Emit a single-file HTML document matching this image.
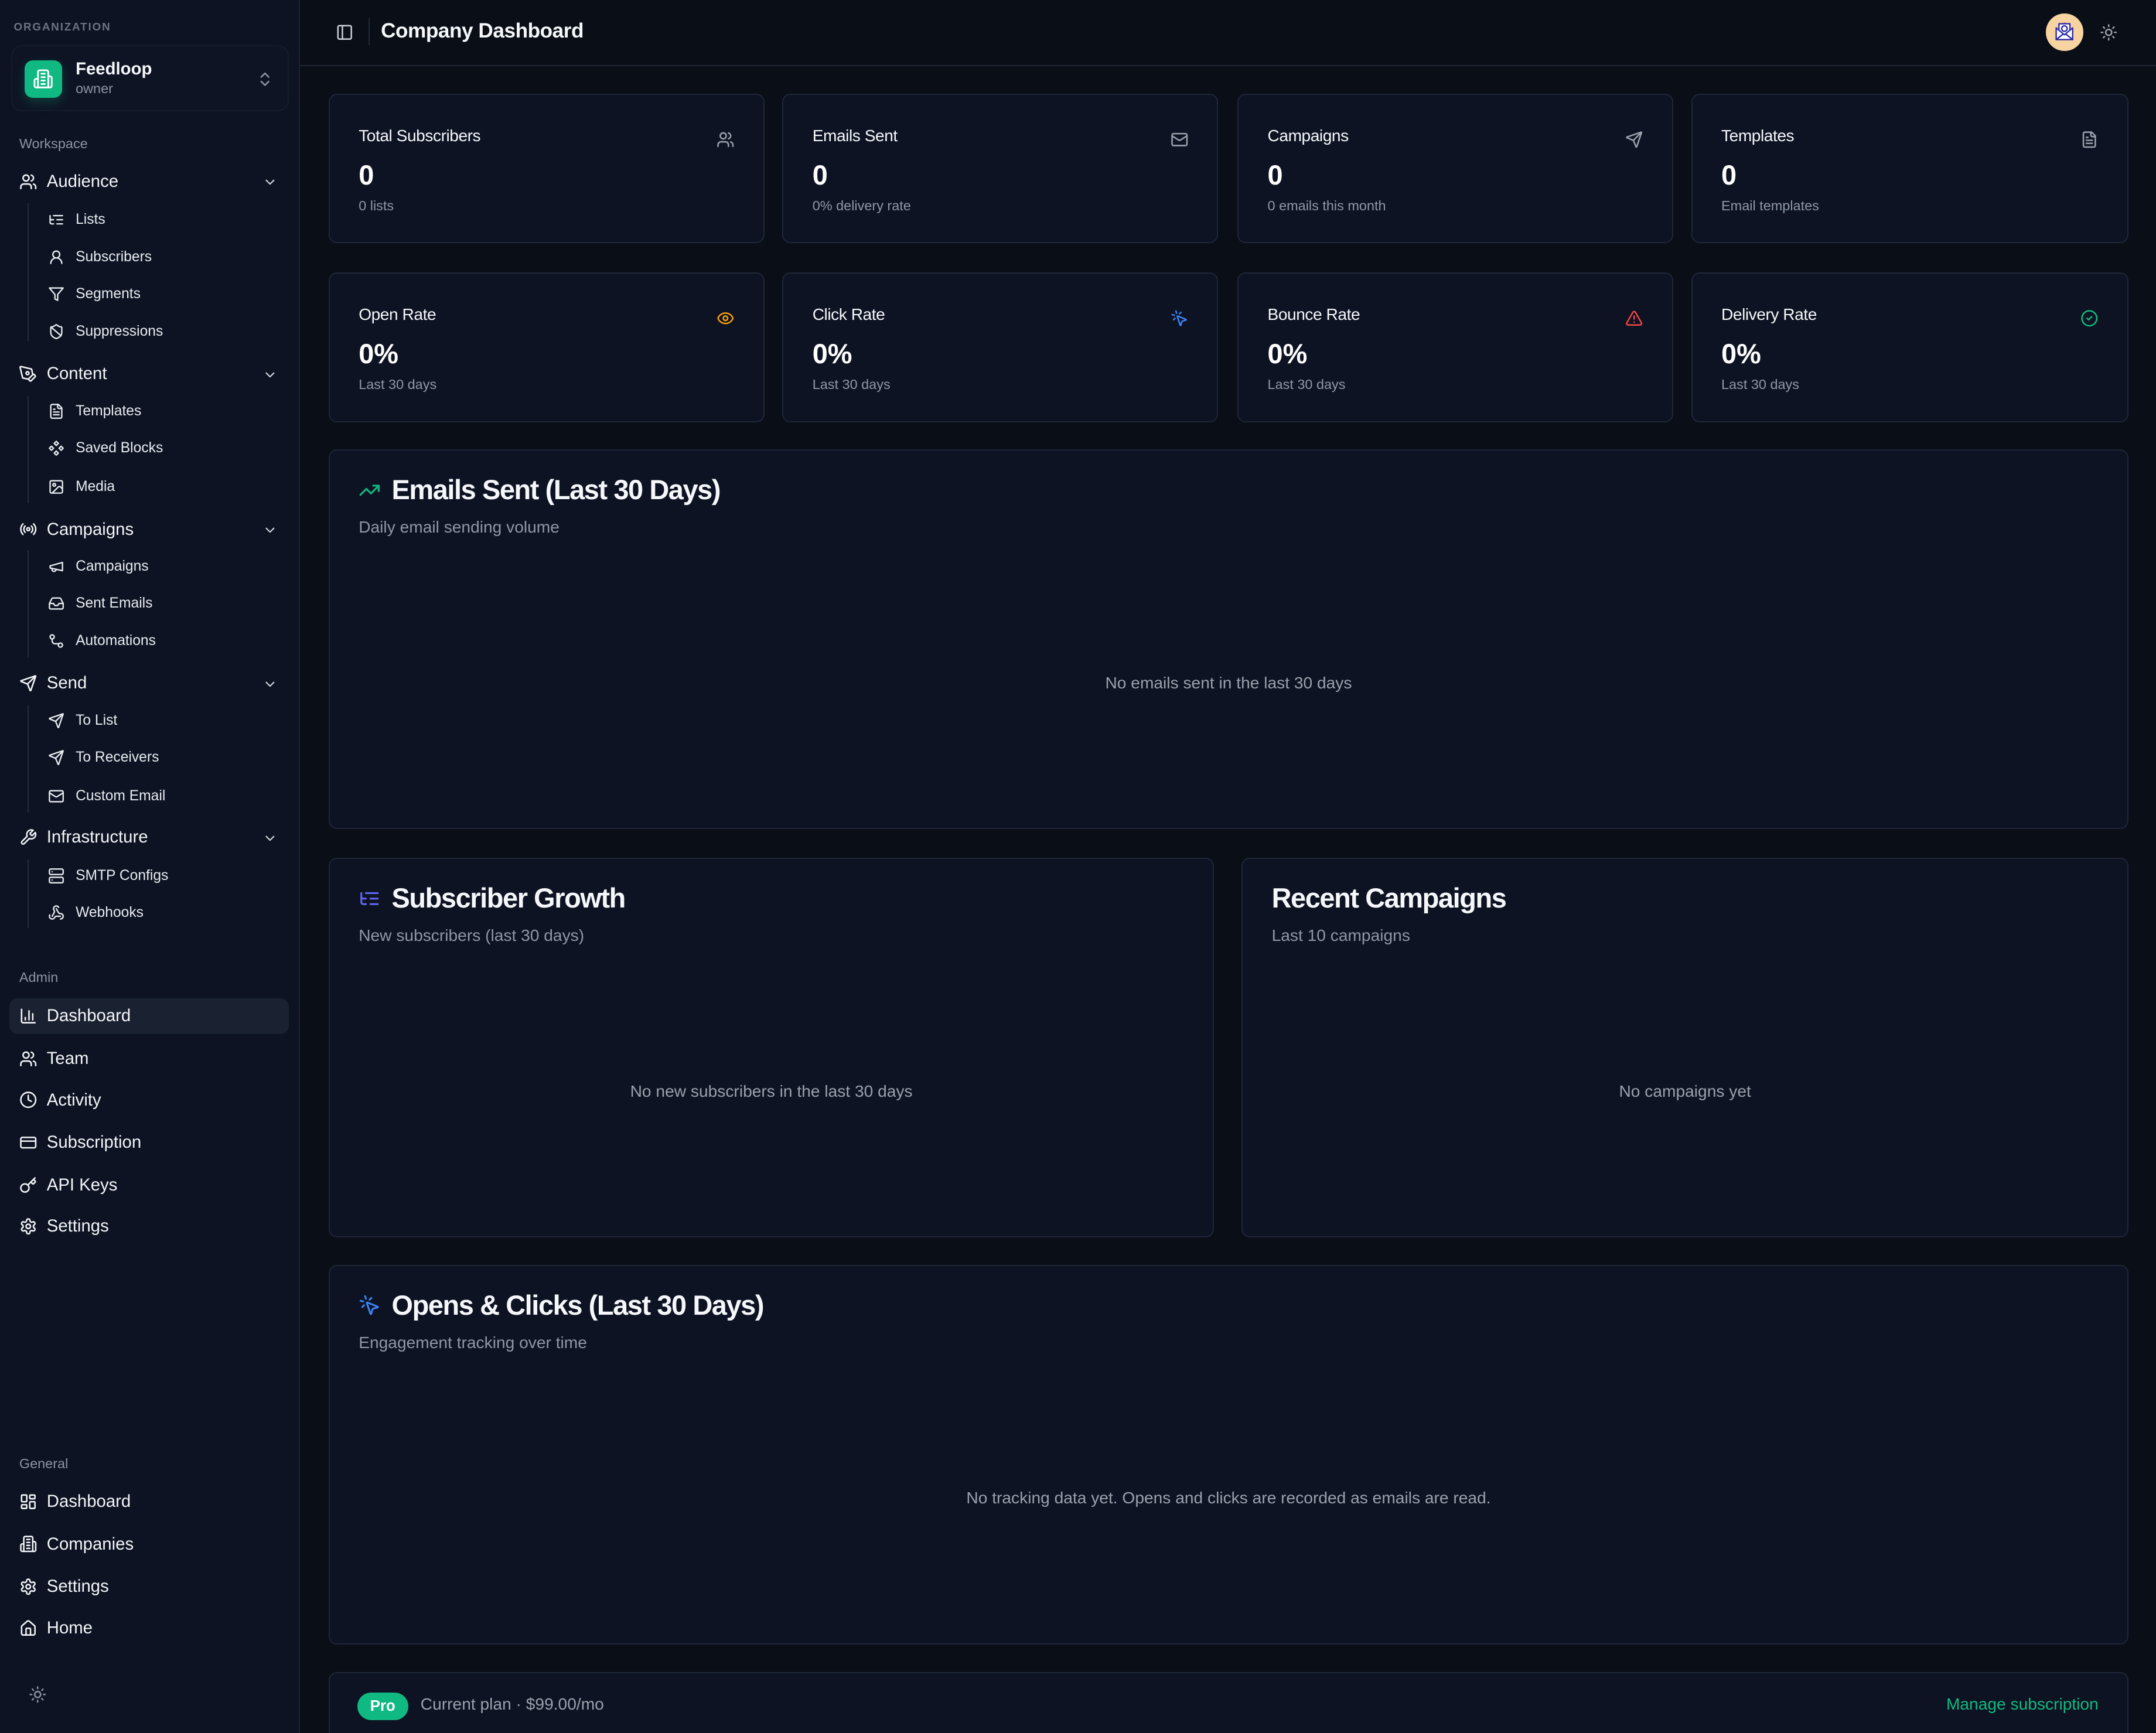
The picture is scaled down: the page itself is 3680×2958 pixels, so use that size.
<!DOCTYPE html>
<html><head><meta charset="utf-8"><style>
*{box-sizing:border-box;margin:0;padding:0}
html,body{width:3680px;height:2958px;overflow:hidden;background:#0a0e17}
#root{zoom:2.34694;width:1568px;height:1261px;position:relative;font-family:"Liberation Sans",sans-serif;color:#f5f7fa;background:#0a0e17;overflow:hidden}
.sb{position:absolute;left:0;top:0;width:218px;height:1261px;background:#0d1322;border-right:1px solid #1c2333}
.a{position:absolute;white-space:nowrap}
svg{fill:none;stroke:currentColor;stroke-width:2;stroke-linecap:round;stroke-linejoin:round}
.top{position:absolute;left:14px;font-size:12.5px;color:#f3f5f8;display:flex;align-items:center;height:20px}
.top svg{width:13px;height:13px;margin-right:7px}
.sub{position:absolute;left:35px;font-size:10.5px;color:#e8ebf0;display:flex;align-items:center;height:18px}
.sub svg{width:12px;height:12px;margin-right:8px}
.chev{position:absolute;left:191px;width:11px;height:11px;color:#d0d4dc}
.vl{position:absolute;left:20px;width:1px;background:#232b3b}
.lbl{position:absolute;left:14px;font-size:10px;color:#8c93a0}
.card{position:absolute;background:#0d1322;border:1px solid #1e2638;border-radius:6px}
.ct{position:absolute;left:21px;top:23px;font-size:12px;color:#f5f7fa;letter-spacing:-.2px}
.cv{position:absolute;left:21px;top:47px;font-size:20px;font-weight:bold;color:#fff}
.cs{position:absolute;left:21px;top:75px;font-size:10px;color:#8f97a6}
.ci{position:absolute;right:21px;top:26px;width:13px;height:13px}
.h2{position:absolute;left:21px;top:17px;font-size:20px;font-weight:bold;letter-spacing:-.6px;display:flex;align-items:center}
.h2 svg{width:16px;height:16px;margin-right:8px}
.h3{position:absolute;left:21px;top:49px;font-size:12px;color:#8f97a6}
.emp{position:absolute;left:0;right:0;text-align:center;font-size:12px;color:#9aa1ad}
</style></head><body><div id="root">
<div class="sb">
<div class="a" style="left:10px;top:15px;font-size:8px;letter-spacing:.8px;color:#6b7280;font-weight:bold">ORGANIZATION</div>
<div class="a" style="left:8px;top:33px;width:202px;height:48px;border-radius:8px;background:#0e1424;border:1px solid #151c2b"></div>
<div class="a" style="left:18px;top:44px;width:27px;height:27px;border-radius:6px;background:#10b981;box-shadow:0 3px 8px rgba(16,185,129,.25);color:#fff;display:flex;align-items:center;justify-content:center"><svg viewBox="0 0 24 24" style="width:15px;height:15px"><path d="M6 22V4a2 2 0 0 1 2-2h8a2 2 0 0 1 2 2v18zM6 12H4a2 2 0 0 0-2 2v6a2 2 0 0 0 2 2h2M18 9h2a2 2 0 0 1 2 2v9a2 2 0 0 1-2 2h-2M10 6h4M10 10h4M10 14h4M10 18h4"/></svg></div>
<div class="a" style="left:55px;top:43px;font-size:12.5px;font-weight:bold">Feedloop</div>
<div class="a" style="left:55px;top:59px;font-size:10px;color:#8c93a0">owner</div>
<svg class="a" viewBox="0 0 24 24" style="left:186px;top:51px;width:13px;height:13px;color:#8c93a0"><path d="m7 15 5 5 5-5M7 9l5-5 5 5"/></svg>
<div class="lbl" style="top:99px">Workspace</div>

<div class="top" style="top:122px"><svg viewBox="0 0 24 24"><path d="M16 21v-2a4 4 0 0 0-4-4H6a4 4 0 0 0-4 4v2"/><circle cx="9" cy="7" r="4"/><path d="M22 21v-2a4 4 0 0 0-3-3.87M16 3.13a4 4 0 0 1 0 7.75"/></svg>Audience</div>
<svg class="chev" viewBox="0 0 24 24" style="top:127px"><path d="m6 9 6 6 6-6"/></svg>
<div class="vl" style="top:148px;height:100px"></div>
<div class="sub" style="top:151px"><svg viewBox="0 0 24 24"><path d="M21 12h-8M21 6H8M21 18h-8M3 6v4c0 1.1.9 2 2 2h3M3 10v6c0 1.1.9 2 2 2h3"/></svg>Lists</div>
<div class="sub" style="top:178px"><svg viewBox="0 0 24 24"><circle cx="12" cy="8" r="5"/><path d="M20 21a8 8 0 0 0-16 0"/></svg>Subscribers</div>
<div class="sub" style="top:205px"><svg viewBox="0 0 24 24"><path d="M22 3H2l8 9.46V19l4 2v-8.54z"/></svg>Segments</div>
<div class="sub" style="top:232px"><svg viewBox="0 0 24 24"><path d="M20 13c0 5-3.5 7.5-7.66 8.95a1 1 0 0 1-.67-.01C7.5 20.5 4 18 4 13V6a1 1 0 0 1 1-1c2 0 4.5-1.2 6.24-2.72a1.17 1.17 0 0 1 1.52 0C14.51 3.81 17 5 19 5a1 1 0 0 1 1 1z"/><path d="M5 6l14 12"/></svg>Suppressions</div>

<div class="top" style="top:262px"><svg viewBox="0 0 24 24"><path d="M15.7 21.3a1 1 0 0 1-1.4 0l-1.6-1.6a1 1 0 0 1 0-1.4l5.6-5.6a1 1 0 0 1 1.4 0l1.6 1.6a1 1 0 0 1 0 1.4z"/><path d="m18 13-1.4-6.9a1 1 0 0 0-.8-.8L2.3 2.1a1 1 0 0 0-1.2 1.2l3.2 13.5a1 1 0 0 0 .8.8L12 19"/><circle cx="11" cy="11" r="2"/></svg>Content</div>
<svg class="chev" viewBox="0 0 24 24" style="top:267px"><path d="m6 9 6 6 6-6"/></svg>
<div class="vl" style="top:288px;height:78px"></div>
<div class="sub" style="top:290px"><svg viewBox="0 0 24 24"><path d="M15 2H6a2 2 0 0 0-2 2v16a2 2 0 0 0 2 2h12a2 2 0 0 0 2-2V7z"/><path d="M14 2v4a2 2 0 0 0 2 2h4M10 9H8M16 13H8M16 17H8"/></svg>Templates</div>
<div class="sub" style="top:317px"><svg viewBox="0 0 24 24"><path d="M12 2l3 3-3 3-3-3zM12 16l3 3-3 3-3-3zM5 9l3 3-3 3-3-3zM19 9l3 3-3 3-3-3z"/></svg>Saved Blocks</div>
<div class="sub" style="top:345px"><svg viewBox="0 0 24 24"><rect x="3" y="3" width="18" height="18" rx="2"/><circle cx="9" cy="9" r="2"/><path d="m21 15-3.1-3.1a2 2 0 0 0-2.8 0L6 21"/></svg>Media</div>

<div class="top" style="top:375px"><svg viewBox="0 0 24 24"><circle cx="12" cy="12" r="2"/><path d="M4.9 19.1C1 15.2 1 8.8 4.9 4.9M7.8 16.2c-2.3-2.3-2.3-6.1 0-8.5M16.2 7.8c2.3 2.3 2.3 6.1 0 8.5M19.1 4.9C23 8.8 23 15.1 19.1 19"/></svg>Campaigns</div>
<svg class="chev" viewBox="0 0 24 24" style="top:380px"><path d="m6 9 6 6 6-6"/></svg>
<div class="vl" style="top:400px;height:78px"></div>
<div class="sub" style="top:403px"><svg viewBox="0 0 24 24"><path d="m3 11 18-5v12L3 14v-3z"/><path d="M11.6 16.8a3 3 0 1 1-5.8-1.6"/></svg>Campaigns</div>
<div class="sub" style="top:430px"><svg viewBox="0 0 24 24"><path d="M22 12h-6l-2 3h-4l-2-3H2"/><path d="M5.45 5.11 2 12v6a2 2 0 0 0 2 2h16a2 2 0 0 0 2-2v-6l-3.45-6.89A2 2 0 0 0 16.76 4H7.24a2 2 0 0 0-1.79 1.11z"/></svg>Sent Emails</div>
<div class="sub" style="top:457px"><svg viewBox="0 0 24 24"><circle cx="6" cy="6" r="3"/><path d="M6 9v3a4 4 0 0 0 4 4h5"/><circle cx="18" cy="18" r="3"/></svg>Automations</div>

<div class="top" style="top:487px"><svg viewBox="0 0 24 24"><path d="M14.5 21.7a.5.5 0 0 0 .9 0l6.5-19a.5.5 0 0 0-.6-.6l-19 6.5a.5.5 0 0 0 0 .9l7.9 3.2a2 2 0 0 1 1.1 1.1z"/><path d="m21.9 2.1-10.9 10.9"/></svg>Send</div>
<svg class="chev" viewBox="0 0 24 24" style="top:492px"><path d="m6 9 6 6 6-6"/></svg>
<div class="vl" style="top:513px;height:78px"></div>
<div class="sub" style="top:515px"><svg viewBox="0 0 24 24"><path d="M14.5 21.7a.5.5 0 0 0 .9 0l6.5-19a.5.5 0 0 0-.6-.6l-19 6.5a.5.5 0 0 0 0 .9l7.9 3.2a2 2 0 0 1 1.1 1.1z"/><path d="m21.9 2.1-10.9 10.9"/></svg>To List</div>
<div class="sub" style="top:542px"><svg viewBox="0 0 24 24"><path d="M14.5 21.7a.5.5 0 0 0 .9 0l6.5-19a.5.5 0 0 0-.6-.6l-19 6.5a.5.5 0 0 0 0 .9l7.9 3.2a2 2 0 0 1 1.1 1.1z"/><path d="m21.9 2.1-10.9 10.9"/></svg>To Receivers</div>
<div class="sub" style="top:570px"><svg viewBox="0 0 24 24"><rect x="2" y="4" width="20" height="16" rx="2"/><path d="m22 7-8.97 5.7a1.94 1.94 0 0 1-2.06 0L2 7"/></svg>Custom Email</div>

<div class="top" style="top:599px"><svg viewBox="0 0 24 24"><path d="M14.7 6.3a1 1 0 0 0 0 1.4l1.6 1.6a1 1 0 0 0 1.4 0l3.77-3.77a6 6 0 0 1-7.94 7.94l-6.91 6.91a2.12 2.12 0 0 1-3-3l6.91-6.91a6 6 0 0 1 7.94-7.94l-3.76 3.76z"/></svg>Infrastructure</div>
<svg class="chev" viewBox="0 0 24 24" style="top:604px"><path d="m6 9 6 6 6-6"/></svg>
<div class="vl" style="top:625px;height:50px"></div>
<div class="sub" style="top:628px"><svg viewBox="0 0 24 24"><rect x="2" y="2" width="20" height="8" rx="2"/><rect x="2" y="14" width="20" height="8" rx="2"/><path d="M6 6h.01M6 18h.01"/></svg>SMTP Configs</div>
<div class="sub" style="top:655px"><svg viewBox="0 0 24 24"><path d="M18 16.98h-5.99c-1.1 0-1.95.94-2.48 1.9A4 4 0 0 1 2 17c.01-.7.2-1.4.57-2"/><path d="m6 17 3.13-5.78c.53-.97.1-2.18-.5-3.1a4 4 0 1 1 6.89-4.06"/><path d="m12 6 3.13 5.73C15.66 12.7 16.9 13 18 13a4 4 0 0 1 0 8"/></svg>Webhooks</div>

<div class="lbl" style="top:705px">Admin</div>
<div class="a" style="left:7px;top:726px;width:203px;height:26px;border-radius:6px;background:#1a2130"></div>
<div class="top" style="top:729px"><svg viewBox="0 0 24 24"><path d="M3 3v16a2 2 0 0 0 2 2h16M18 17V9M13 17V5M8 17v-3"/></svg>Dashboard</div>
<div class="top" style="top:760px"><svg viewBox="0 0 24 24"><path d="M16 21v-2a4 4 0 0 0-4-4H6a4 4 0 0 0-4 4v2"/><circle cx="9" cy="7" r="4"/><path d="M22 21v-2a4 4 0 0 0-3-3.87M16 3.13a4 4 0 0 1 0 7.75"/></svg>Team</div>
<div class="top" style="top:790px"><svg viewBox="0 0 24 24"><circle cx="12" cy="12" r="10"/><path d="M12 6v6l4 2"/></svg>Activity</div>
<div class="top" style="top:821px"><svg viewBox="0 0 24 24"><rect x="2" y="5" width="20" height="14" rx="2"/><path d="M2 10h20"/></svg>Subscription</div>
<div class="top" style="top:852px"><svg viewBox="0 0 24 24"><path d="m15.5 7.5 2.3 2.3a1 1 0 0 0 1.4 0l2.1-2.1a1 1 0 0 0 0-1.4L19 4M21 2l-9.6 9.6"/><circle cx="7.5" cy="15.5" r="5.5"/></svg>API Keys</div>
<div class="top" style="top:882px"><svg viewBox="0 0 24 24"><path d="M12.22 2h-.44a2 2 0 0 0-2 2v.18a2 2 0 0 1-1 1.73l-.43.25a2 2 0 0 1-2 0l-.15-.08a2 2 0 0 0-2.73.73l-.22.38a2 2 0 0 0 .73 2.73l.15.1a2 2 0 0 1 1 1.72v.51a2 2 0 0 1-1 1.74l-.15.09a2 2 0 0 0-.73 2.73l.22.38a2 2 0 0 0 2.73.73l.15-.08a2 2 0 0 1 2 0l.43.25a2 2 0 0 1 1 1.73V20a2 2 0 0 0 2 2h.44a2 2 0 0 0 2-2v-.18a2 2 0 0 1 1-1.73l.43-.25a2 2 0 0 1 2 0l.15.08a2 2 0 0 0 2.73-.73l.22-.39a2 2 0 0 0-.73-2.73l-.15-.08a2 2 0 0 1-1-1.74v-.5a2 2 0 0 1 1-1.74l.15-.09a2 2 0 0 0 .73-2.73l-.22-.38a2 2 0 0 0-2.73-.73l-.15.08a2 2 0 0 1-2 0l-.43-.25a2 2 0 0 1-1-1.73V4a2 2 0 0 0-2-2z"/><circle cx="12" cy="12" r="3"/></svg>Settings</div>

<div class="lbl" style="top:1059px">General</div>
<div class="top" style="top:1082px"><svg viewBox="0 0 24 24"><rect x="3" y="3" width="7" height="9" rx="1"/><rect x="14" y="3" width="7" height="5" rx="1"/><rect x="14" y="12" width="7" height="9" rx="1"/><rect x="3" y="16" width="7" height="5" rx="1"/></svg>Dashboard</div>
<div class="top" style="top:1113px"><svg viewBox="0 0 24 24"><path d="M6 22V4a2 2 0 0 1 2-2h8a2 2 0 0 1 2 2v18zM6 12H4a2 2 0 0 0-2 2v6a2 2 0 0 0 2 2h2M18 9h2a2 2 0 0 1 2 2v9a2 2 0 0 1-2 2h-2M10 6h4M10 10h4M10 14h4M10 18h4"/></svg>Companies</div>
<div class="top" style="top:1144px"><svg viewBox="0 0 24 24"><path d="M12.22 2h-.44a2 2 0 0 0-2 2v.18a2 2 0 0 1-1 1.73l-.43.25a2 2 0 0 1-2 0l-.15-.08a2 2 0 0 0-2.73.73l-.22.38a2 2 0 0 0 .73 2.73l.15.1a2 2 0 0 1 1 1.72v.51a2 2 0 0 1-1 1.74l-.15.09a2 2 0 0 0-.73 2.73l.22.38a2 2 0 0 0 2.73.73l.15-.08a2 2 0 0 1 2 0l.43.25a2 2 0 0 1 1 1.73V20a2 2 0 0 0 2 2h.44a2 2 0 0 0 2-2v-.18a2 2 0 0 1 1-1.73l.43-.25a2 2 0 0 1 2 0l.15.08a2 2 0 0 0 2.73-.73l.22-.39a2 2 0 0 0-.73-2.73l-.15-.08a2 2 0 0 1-1-1.74v-.5a2 2 0 0 1 1-1.74l.15-.09a2 2 0 0 0 .73-2.73l-.22-.38a2 2 0 0 0-2.73-.73l-.15.08a2 2 0 0 1-2 0l-.43-.25a2 2 0 0 1-1-1.73V4a2 2 0 0 0-2-2z"/><circle cx="12" cy="12" r="3"/></svg>Settings</div>
<div class="top" style="top:1174px"><svg viewBox="0 0 24 24"><path d="M15 21v-8a1 1 0 0 0-1-1h-4a1 1 0 0 0-1 1v8"/><path d="M3 10a2 2 0 0 1 .709-1.528l7-5.999a2 2 0 0 1 2.582 0l7 5.999A2 2 0 0 1 21 10v9a2 2 0 0 1-2 2H5a2 2 0 0 1-2-2z"/></svg>Home</div>
<svg class="a" viewBox="0 0 24 24" style="left:21px;top:1226px;width:13px;height:13px;color:#8c93a0"><circle cx="12" cy="12" r="4"/><path d="M12 2v2M12 20v2M4.93 4.93l1.41 1.41M17.66 17.66l1.41 1.41M2 12h2M20 12h2M6.34 17.66l-1.41 1.41M19.07 4.93l-1.41 1.41"/></svg>
</div>

<!-- header -->
<div class="a" style="left:218px;top:0;width:1350px;height:48px;border-bottom:1px solid #1e2638;background:#0a0e17"></div>
<svg class="a" viewBox="0 0 24 24" style="left:244px;top:17px;width:13px;height:13px;color:#c9ced6"><rect x="3" y="3" width="18" height="18" rx="2"/><path d="M9 3v18"/></svg>
<div class="a" style="left:268px;top:13px;width:1px;height:20px;background:#232b3b"></div>
<div class="a" style="left:277px;top:14px;font-size:15px;font-weight:bold;letter-spacing:-.2px">Company Dashboard</div>
<div class="a" style="left:1488px;top:10px;width:27px;height:27px;border-radius:50%;background:#f6d3a0;overflow:hidden">
<svg viewBox="0 0 27 27" style="width:27px;height:27px;stroke:#2b2aa8;stroke-width:1"><path d="M10 9l3.5-2.5L17 9" fill="#d9189a" stroke="none"/><rect x="9.5" y="7.5" width="8" height="8" fill="#fff"/><circle cx="13.5" cy="11" r="2"/><path d="M7.5 10.5v8.5h12v-8.5l-6 5z" fill="#fff"/><path d="M7.5 19l5-4M19.5 19l-5-4"/></svg></div>
<svg class="a" viewBox="0 0 24 24" style="left:1527px;top:17px;width:13px;height:13px;color:#9aa1ad"><circle cx="12" cy="12" r="4"/><path d="M12 2v2M12 20v2M4.93 4.93l1.41 1.41M17.66 17.66l1.41 1.41M2 12h2M20 12h2M6.34 17.66l-1.41 1.41M19.07 4.93l-1.41 1.41"/></svg>

<!-- stat cards row 1 -->
<div class="card" style="left:239px;top:68px;width:317px;height:109px"><div class="ct">Total Subscribers</div><div class="cv">0</div><div class="cs">0 lists</div><svg class="ci" viewBox="0 0 24 24" style="color:#9aa1ad"><path d="M16 21v-2a4 4 0 0 0-4-4H6a4 4 0 0 0-4 4v2"/><circle cx="9" cy="7" r="4"/><path d="M22 21v-2a4 4 0 0 0-3-3.87M16 3.13a4 4 0 0 1 0 7.75"/></svg></div>
<div class="card" style="left:569px;top:68px;width:317px;height:109px"><div class="ct">Emails Sent</div><div class="cv">0</div><div class="cs">0% delivery rate</div><svg class="ci" viewBox="0 0 24 24" style="color:#9aa1ad"><rect x="2" y="4" width="20" height="16" rx="2"/><path d="m22 7-8.97 5.7a1.94 1.94 0 0 1-2.06 0L2 7"/></svg></div>
<div class="card" style="left:900px;top:68px;width:317px;height:109px"><div class="ct">Campaigns</div><div class="cv">0</div><div class="cs">0 emails this month</div><svg class="ci" viewBox="0 0 24 24" style="color:#9aa1ad"><path d="M14.5 21.7a.5.5 0 0 0 .9 0l6.5-19a.5.5 0 0 0-.6-.6l-19 6.5a.5.5 0 0 0 0 .9l7.9 3.2a2 2 0 0 1 1.1 1.1z"/><path d="m21.9 2.1-10.9 10.9"/></svg></div>
<div class="card" style="left:1230px;top:68px;width:318px;height:109px"><div class="ct">Templates</div><div class="cv">0</div><div class="cs">Email templates</div><svg class="ci" viewBox="0 0 24 24" style="color:#9aa1ad"><path d="M15 2H6a2 2 0 0 0-2 2v16a2 2 0 0 0 2 2h12a2 2 0 0 0 2-2V7z"/><path d="M14 2v4a2 2 0 0 0 2 2h4M10 9H8M16 13H8M16 17H8"/></svg></div>
<!-- row 2 -->
<div class="card" style="left:239px;top:198px;width:317px;height:109px"><div class="ct">Open Rate</div><div class="cv">0%</div><div class="cs">Last 30 days</div><svg class="ci" viewBox="0 0 24 24" style="color:#f59e0b"><path d="M2.06 12.35a1 1 0 0 1 0-.7 10.75 10.75 0 0 1 19.88 0 1 1 0 0 1 0 .7 10.75 10.75 0 0 1-19.88 0"/><circle cx="12" cy="12" r="3"/></svg></div>
<div class="card" style="left:569px;top:198px;width:317px;height:109px"><div class="ct">Click Rate</div><div class="cv">0%</div><div class="cs">Last 30 days</div><svg class="ci" viewBox="0 0 24 24" style="color:#3b82f6"><path d="M14 4.1 12 6M5.1 8l-2.9-.8M6 12l-1.9 2M7.2 2.2 8 5.1M9.04 9.69a.5.5 0 0 1 .65-.65l11 4.5a.5.5 0 0 1-.07.95l-4.21 1.09a2 2 0 0 0-1.43 1.43l-1.09 4.21a.5.5 0 0 1-.95.07z"/></svg></div>
<div class="card" style="left:900px;top:198px;width:317px;height:109px"><div class="ct">Bounce Rate</div><div class="cv">0%</div><div class="cs">Last 30 days</div><svg class="ci" viewBox="0 0 24 24" style="color:#ef4444"><path d="m21.73 18-8-14a2 2 0 0 0-3.48 0l-8 14A2 2 0 0 0 4 21h16a2 2 0 0 0 1.73-3M12 9v4M12 17h.01"/></svg></div>
<div class="card" style="left:1230px;top:198px;width:318px;height:109px"><div class="ct">Delivery Rate</div><div class="cv">0%</div><div class="cs">Last 30 days</div><svg class="ci" viewBox="0 0 24 24" style="color:#10b981"><circle cx="12" cy="12" r="10"/><path d="m9 12 2 2 4-4"/></svg></div>

<!-- Emails sent chart -->
<div class="card" style="left:239px;top:327px;width:1309px;height:276px">
<div class="h2"><svg viewBox="0 0 24 24" style="color:#10b981"><path d="M22 7 13.5 15.5 8.5 10.5 2 17M16 7h6v6"/></svg>Emails Sent (Last 30 Days)</div>
<div class="h3">Daily email sending volume</div>
<div class="emp" style="top:162px">No emails sent in the last 30 days</div></div>

<div class="card" style="left:239px;top:624px;width:644px;height:276px">
<div class="h2"><svg viewBox="0 0 24 24" style="color:#6366f1"><path d="M21 12h-8M21 6H8M21 18h-8M3 6v4c0 1.1.9 2 2 2h3M3 10v6c0 1.1.9 2 2 2h3"/></svg>Subscriber Growth</div>
<div class="h3">New subscribers (last 30 days)</div>
<div class="emp" style="top:162px">No new subscribers in the last 30 days</div></div>

<div class="card" style="left:903px;top:624px;width:645px;height:276px">
<div class="h2">Recent Campaigns</div>
<div class="h3">Last 10 campaigns</div>
<div class="emp" style="top:162px">No campaigns yet</div></div>

<div class="card" style="left:239px;top:920px;width:1309px;height:276px">
<div class="h2"><svg viewBox="0 0 24 24" style="color:#3b82f6"><path d="M14 4.1 12 6M5.1 8l-2.9-.8M6 12l-1.9 2M7.2 2.2 8 5.1M9.04 9.69a.5.5 0 0 1 .65-.65l11 4.5a.5.5 0 0 1-.07.95l-4.21 1.09a2 2 0 0 0-1.43 1.43l-1.09 4.21a.5.5 0 0 1-.95.07z"/></svg>Opens &amp; Clicks (Last 30 Days)</div>
<div class="h3">Engagement tracking over time</div>
<div class="emp" style="top:162px">No tracking data yet. Opens and clicks are recorded as emails are read.</div></div>

<div class="card" style="left:239px;top:1216px;width:1309px;height:70px">
<div class="a" style="left:20px;top:14px;width:37px;height:20px;border-radius:10px;background:#10b981;color:#fff;font-size:11px;font-weight:bold;text-align:center;line-height:20px">Pro</div>
<div class="a" style="left:66px;top:16px;font-size:12px;color:#9aa1ad">Current plan · $99.00/mo</div>
<div class="a" style="right:21px;top:16px;font-size:12px;color:#10b981">Manage subscription</div></div>
</div></body></html>
